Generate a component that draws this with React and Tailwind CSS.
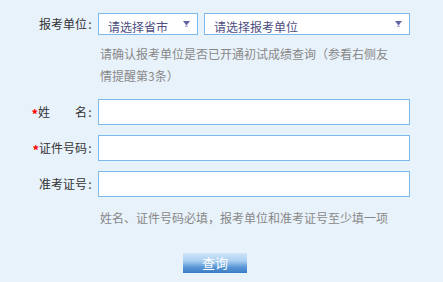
import React from 'react';

const FONT = "font-['Noto_Sans_CJK_SC','Noto_Sans',sans-serif]";

const Arrow = () => (
  <svg width="7" height="6" viewBox="0 0 7 6" className="shrink-0">
    <polygon points="0,0 7,0 3.5,4.5" fill="#6464a4" />
    <rect x="2" y="4.5" width="3" height="1.5" fill="#b8b8d8" />
  </svg>
);

const Select = ({ text, width }) => (
  <div
    className={`${width} h-[22px] border border-[#7fb9ea] bg-white flex items-center justify-between pl-[9px] pr-[7px]`}
  >
    <span className="text-[12px] leading-none pt-[5px] text-[#4e4e80]">{text}</span>
    <Arrow />
  </div>
);

const Label = ({ required, children }) => (
  <div className="w-[93px] shrink-0 flex justify-end items-center text-[12px] text-[#333] leading-none">
    {required && (
      <span className="text-[#ff0000] text-[13px] font-bold leading-none translate-y-[1px]">*</span>
    )}
    {children}
    <span className="inline-block w-[6px] text-center">:</span>
  </div>
);

const Field = ({ label, required }) => (
  <div className="flex items-center">
    <Label required={required}>{label}</Label>
    <input className="ml-[5px] w-[312px] h-[26px] border border-[#7fb9ea] bg-white outline-none" />
  </div>
);

export default function App() {
  return (
    <div className={`w-[443px] h-[282px] bg-[#e8f2fb] pt-[13px] ${FONT}`}>
      <div className="flex items-center">
        <Label>报考单位</Label>
        <div className="ml-[5px] flex gap-[6px]">
          <Select text="请选择省市" width="w-[100px]" />
          <Select text="请选择报考单位" width="w-[206px]" />
        </div>
      </div>

      <p className="ml-[100px] mt-[8px] w-[292px] text-[12px] leading-[22px] text-[#888]">
        请确认报考单位是否已开通初试成绩查询（参看右侧友情提醒第3条）
      </p>

      <div className="mt-[12px] flex flex-col gap-[10px]">
        <Field
          required
          label={
            <>
              姓<span className="inline-block w-[25px]" />名
            </>
          }
        />
        <Field required label="证件号码" />
        <Field label="准考证号" />
      </div>

      <p className="ml-[100px] mt-[10px] text-[12px] leading-[22px] text-[#888]">
        姓名、证件号码必填，报考单位和准考证号至少填一项
      </p>

      <div className="mt-[20px] pl-[183px]">
        <button className="w-[64px] h-[20px] bg-[linear-gradient(to_bottom,#d0e5f9_0%,#a9cff1_40%,#5b97d6_70%,#3a7cc5_100%)] text-white text-[13px] leading-none">
          查询
        </button>
      </div>
    </div>
  );
}
